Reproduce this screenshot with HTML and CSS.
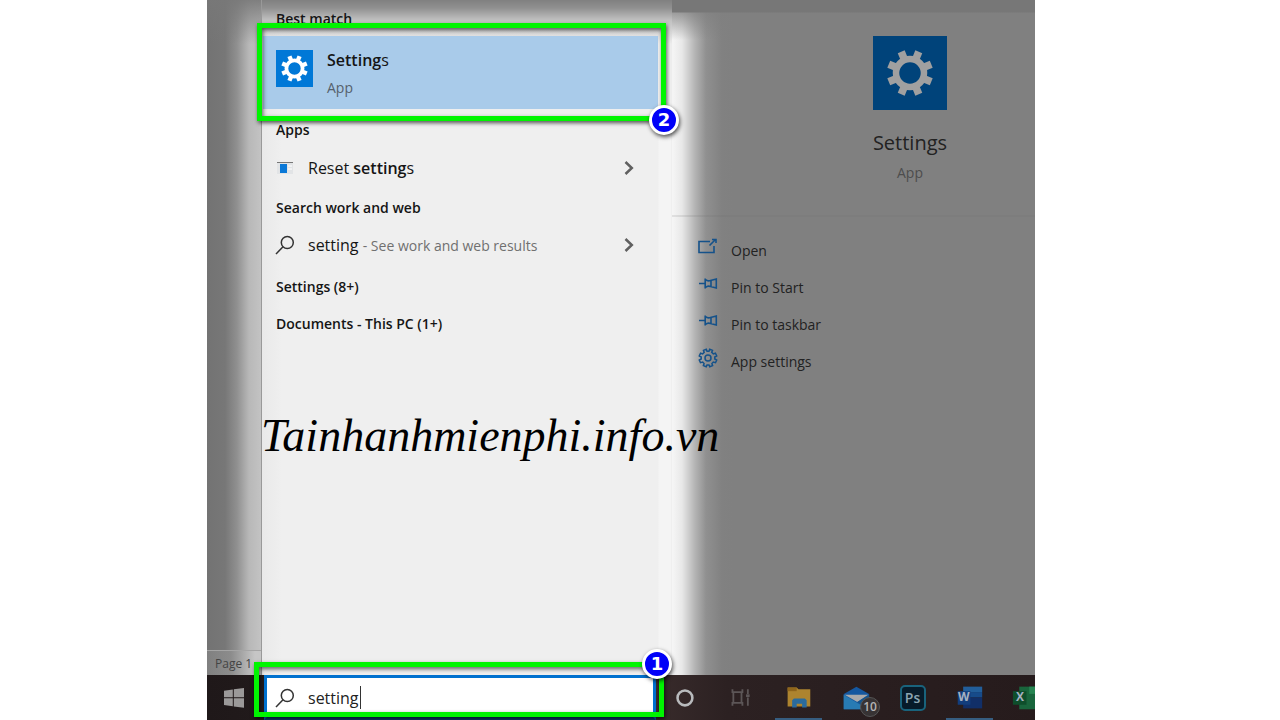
FILE: index.html
```html
<!DOCTYPE html>
<html lang="en">
<head>
<meta charset="utf-8">
<title>Search - Settings</title>
<meta name="viewport" content="width=device-width, initial-scale=1">
<link rel="stylesheet" href="styles.css">
</head>
<body>
<svg class="defs" aria-hidden="true">
  <symbol id="gear" viewBox="0 0 74 74">
    <circle cx="37" cy="37" r="14" fill="none" stroke="currentColor" stroke-width="6.5"/>
    <g stroke="currentColor" stroke-width="7.5">
      <path d="M37 22V14" transform="rotate(22.5 37 37)"/>
      <path d="M37 22V14" transform="rotate(67.500 37 37)"/>
      <path d="M37 22V14" transform="rotate(112.500 37 37)"/>
      <path d="M37 22V14" transform="rotate(157.500 37 37)"/>
      <path d="M37 22V14" transform="rotate(202.500 37 37)"/>
      <path d="M37 22V14" transform="rotate(247.500 37 37)"/>
      <path d="M37 22V14" transform="rotate(292.500 37 37)"/>
      <path d="M37 22V14" transform="rotate(337.500 37 37)"/>
    </g>
  </symbol>
  <symbol id="lens" viewBox="0 0 20 20">
    <circle cx="12.300" cy="7.500" r="6" fill="none" stroke="currentColor" stroke-width="1.500"/>
    <path d="M8 11.800 1 19" fill="none" stroke="currentColor" stroke-width="1.500"/>
  </symbol>
  <symbol id="chevron" viewBox="0 0 10 14">
    <path d="M1.500 1 7.800 7 1.500 13" fill="none" stroke="currentColor" stroke-width="2.500"/>
  </symbol>
  <symbol id="pin" viewBox="0 0 20 20">
    <path d="M1 9.500H7M7.200 4.500V14.500M7.500 5.500C9 7 11 7 12.500 6.500L18.300 5V14L12.500 12.500C11 12 9 12 7.500 13.500M13 6.500V12.500" fill="none" stroke="currentColor" stroke-width="1.600"/>
  </symbol>
</svg>
<div class="page">
  <div class="screen">
    <main class="desktop">
      <div class="document"><div class="status">Page 1</div></div>
      <section class="results">
        <h2 class="heading heading-first">Best match</h2>
        <div class="best-wrap">
          <button class="best">
            <span class="tile tile-small"><svg viewBox="5 5 64 64"><use href="#gear" width="74" height="74"/></svg></span>
            <span class="best-text"><span class="item-title"><b>Setting</b>s</span><span class="item-kind">App</span></span>
          </button>
          <div class="highlight highlight-best"><span class="step">2</span></div>
        </div>
        <h2 class="heading">Apps</h2>
        <button class="row">
          <svg class="row-icon" viewBox="0 0 20 20"><path d="M2 4h16v12H2z" fill="#e2e4e6"/><path d="M2 4.500h16" stroke="#777"/><path d="M5 6h7v9H5z" fill="#0a78d7"/><path d="M13 8h4M13 11h4" stroke="#fff"/></svg>
          <span class="row-text">Reset <b>setting</b>s</span>
          <svg class="chevron"><use href="#chevron"/></svg>
        </button>
        <h2 class="heading">Search work and web</h2>
        <button class="row">
          <svg class="row-icon"><use href="#lens"/></svg>
          <span class="row-text">setting <small>- See work and web results</small></span>
          <svg class="chevron"><use href="#chevron"/></svg>
        </button>
        <div class="more">
          <h2 class="heading heading-more">Settings (8+)</h2>
          <h2 class="heading heading-more">Documents - This PC (1+)</h2>
        </div>
        <div class="watermark">Tainhanhmienphi.info.vn</div>
      </section>
      <aside class="preview">
        <div class="summary">
          <span class="tile tile-large"><svg><use href="#gear"/></svg></span>
          <h1 class="app-name">Settings</h1>
          <p class="app-kind">App</p>
        </div>
        <div class="actions">
          <button class="action"><svg viewBox="0 0 20 20"><path d="M12 4.500H1V15.500H16V9M11.500 8.500 17.500 2.500M14 2.500h4V6" fill="none" stroke="currentColor" stroke-width="1.600"/></svg>Open</button>
          <button class="action"><svg><use href="#pin"/></svg>Pin to Start</button>
          <button class="action"><svg><use href="#pin"/></svg>Pin to taskbar</button>
          <button class="action"><svg viewBox="0 0 20 20"><g fill="none" stroke="currentColor" stroke-width="1.500"><circle cx="10" cy="10" r="3"/><path d="M8.300 1.300 9 3.200H11L11.700 1.300 14.500 2.400 13.700 4.400 15.300 5.900 17.400 5.200 18.700 8 16.800 9V11L18.700 12 17.500 14.700 15.300 14.100 13.900 15.600 14.600 17.600 11.800 18.700 11 16.900H9L8.200 18.700 5.400 17.600 6.100 15.600 4.700 14.100 2.500 14.700 1.300 12 3.200 11V9L1.300 8 2.600 5.200 4.700 5.900 6.200 4.400 5.500 2.400Z"/></g></svg>App settings</button>
        </div>
      </aside>
    </main>
    <footer class="taskbar">
      <button class="start" aria-label="Start"><svg viewBox="0 0 20 20"><path d="M0 2.800 8.800 1.500V9.300H0ZM9.800 1.300 20 0V9.300H9.800ZM0 10.300H8.800V18.300L0 17ZM9.800 10.300H20V19.800L9.800 18.400Z" fill="#9b9999"/></svg></button>
      <div class="search">
        <label for="query" aria-label="Search"><svg><use href="#lens"/></svg></label>
        <input id="query" type="text" value="setting">
        <span class="caret"></span>
        <div class="highlight highlight-search"><span class="step">1</span></div>
      </div>
      <nav class="icons">
        <button aria-label="Cortana"><svg viewBox="0 0 32 32"><circle cx="16.500" cy="16.500" r="8.200" fill="none" stroke="#b9bbbd" stroke-width="2.800"/></svg></button>
        <button aria-label="Task view"><svg viewBox="0 0 32 32"><path d="M6 7v3h11V7M6 25v-3h11v3M7 10v12M16 10v12M23 7v5M23 16v9" fill="none" stroke="#5c5657" stroke-width="2"/><path d="M21 12.500h4v3h-4z" fill="#5c5657"/></svg></button>
        <button class="open" aria-label="File Explorer"><svg viewBox="0 0 32 32"><path d="M4 5h10l2 2h13v19H4z" fill="#ad842f"/><path d="M4 5h10v4H4z" fill="#8f651b"/><path d="M9 27v-8l2-2h12l2 2v8h-5v-4h-6v4z" fill="#2a6b9d"/></svg></button>
        <button class="mail" aria-label="Mail"><svg viewBox="0 0 32 32"><path d="M3 12 17 4 31 12V29H3Z" fill="#1558a0"/><path d="M4 13H30L18 21Z" fill="#aaaaab"/><path d="M3 13 18 22 31 29H3Z" fill="#287bb4"/><path d="M31 13V29L18 21Z" fill="#14548c"/></svg><span class="count">10</span></button>
        <button aria-label="Photoshop"><span class="ps">Ps</span></button>
        <button class="open" aria-label="Word"><svg viewBox="0 0 32 32"><path d="M9 4h21v6H9z" fill="#225e9a"/><path d="M9 10h21v6H9z" fill="#174b8a"/><path d="M9 16h21v12H9z" fill="#112f68"/><path d="M3 9h14v15H3z" fill="#123d7c"/></svg><span class="letter">W</span></button>
        <button aria-label="Excel"><svg viewBox="0 0 32 32"><path d="M8 4h24v25H8z" fill="#19653c"/><path d="M19 4h13v8H19z" fill="#278552"/><path d="M1 9h15v15H1z" fill="#0e4e2b"/></svg><span class="letter letter-x">X</span></button>
      </nav>
    </footer>
  </div>
</div>
</body>
</html>
```
FILE: styles.css
```css
* { box-sizing: border-box; }
body { margin: 0; background: #fff; color: #151515; font-family: "Open Sans", "Noto Sans", sans-serif; }
button { display: flex; align-items: center; margin: 0; padding: 0; border: 0; background: none; color: inherit; font: inherit; text-align: left; }
h1, h2, p { margin: 0; }
b { font-weight: 600; }
.defs { position: absolute; width: 0; height: 0; }

.page { display: grid; grid-template-columns: 207fr 828fr 245fr; min-height: 100vh; }
.screen { grid-column: 2; display: flex; flex-direction: column; min-width: 0; overflow: hidden; }
.desktop { flex: 1; display: grid; grid-template-columns: 54px 411px 1fr; }

.document { display: flex; align-items: flex-end; background: linear-gradient(rgba(120, 120, 120, .9) 0, rgba(120, 120, 120, 0) 44px), linear-gradient(90deg, #737373 0, #777 18px, #909090 30px, #b8b8b8 42px, #c3c3c3 54px); }
.status { width: 100%; height: 25px; padding-left: 8px; border-top: 1px solid #a5a5a5; background: linear-gradient(90deg, #808080, #8c8c8c 24px, #c6c6c6 48px); color: #444; font-size: 12px; line-height: 25px; white-space: nowrap; }

.results { position: relative; border-left: 1px solid #999; background: linear-gradient(#808080 0, #909090 8px, #c0c0c0 20px, rgba(239, 239, 239, 0) 44px), linear-gradient(90deg, #e9e9e9 0, #efefef 20px, #efefef 396px, #f4f4f4 397px, #f4f4f4 409px, #eaeaea 410px); }
.heading { height: 41px; padding-left: 14px; font-size: 14px; font-weight: 600; line-height: 41px; }
.heading-first { height: 36px; line-height: 38px; }
.heading-more { height: 37px; line-height: 37px; }
.more { padding-top: 5px; }
.best-wrap { position: relative; margin: 0 14px 0 1px; }
.best { width: 100%; height: 73px; gap: 14px; align-items: flex-start; padding: 14px 13px 0; background: #a9cbea; }
.tile { display: flex; flex: none; background: #0078d7; color: #fff; }
.tile svg { width: 100%; height: 100%; }
.tile-small { width: 37px; height: 37px; }
.best-text { display: flex; flex-direction: column; gap: 4px; margin-top: -2px; }
.item-title { font-size: 16px; line-height: 24px; }
.item-kind { color: #56616c; font-size: 14px; line-height: 24px; }
.row { width: 100%; height: 36px; padding: 0 38px 0 13px; font-size: 16px; }
.row + .heading { line-height: 43px; }
.row-icon { flex: none; width: 20px; height: 20px; color: #333; }
.row-text { flex: 1; padding-left: 13px; white-space: nowrap; }
.row-text small { color: #707070; font-size: 14px; }
.chevron { width: 10px; height: 14px; color: #606060; }
.watermark { position: absolute; top: 404px; left: -1px; z-index: 3; color: #000; font-family: "Liberation Serif", serif; font-size: 46px; font-style: italic; line-height: 64px; white-space: nowrap; }

.highlight { position: absolute; z-index: 2; border: 5px solid #00f500; box-shadow: 1px 2px 4px rgba(0, 0, 0, .65), inset 1px 2px 4px rgba(0, 0, 0, .6); pointer-events: none; }
.highlight-best { inset: -13px -8px -12px -6px; }
.highlight-search { inset: -16px -11px 0 -13px; }
.step { position: absolute; right: -18px; width: 30px; height: 30px; border: 3px solid #fff; border-radius: 50%; background: #0000f8; box-shadow: 1px 2px 4px rgba(0, 0, 0, .7); color: #fff; font: bold 18px/24px "DejaVu Sans", sans-serif; text-align: center; }
.highlight-best .step { bottom: -19px; }
.highlight-search .step { top: -18px; right: -13px; }

.preview { background: linear-gradient(#777 0, #777 12px, rgba(128, 128, 128, .75) 13px, rgba(128, 128, 128, 0) 40px), linear-gradient(90deg, #f6f6f6 0, #e8e8e8 10px, #b4b4b4 23px, #909090 34px, #818181 50px, #808080 60px); color: #222; }
.summary { display: flex; flex-direction: column; align-items: center; height: 217px; padding: 36px 0 0 113px; border-bottom: 2px solid rgba(110, 110, 110, .15); }
.tile-large { width: 74px; height: 74px; background: #00437a; color: #a0a0a0; }
.app-name { margin-top: 18px; font-size: 20px; font-weight: 400; line-height: 30px; }
.app-kind { margin-top: 3px; color: #4d4d4d; font-size: 14px; line-height: 24px; }
.actions { padding: 15px 0 0 26px; }
.action { height: 37px; gap: 13px; font-size: 14px; }
.action svg { width: 20px; height: 20px; margin-bottom: 7px; color: #15528a; }

.taskbar { display: grid; grid-template-columns: 57px 392px 1fr; height: 45px; background: linear-gradient(90deg, #1f1819, #211a1b 55px, #382b2b 450px, #2c2122 520px, #261b1c); }
.start { justify-content: center; }
.start svg { width: 20px; height: 20px; margin-left: -3px; }
.search { position: relative; display: flex; align-items: center; border: 3px solid #0071cf; border-bottom-color: #0b3d69; background: #fff; }
.search label { display: flex; padding-left: 8px; }
.search label svg { width: 20px; height: 20px; color: #333; }
.search input { flex: 1; min-width: 0; height: 36px; padding: 0 13px; border: 0; outline: 0; background: none; color: #222; font: 16px "Open Sans", sans-serif; }
.caret { position: absolute; top: 8px; left: 93px; width: 1px; height: 23px; background: #333; }
.icons { display: flex; min-width: 0; }
.icons button { position: relative; flex: 0 0 57px; justify-content: center; }
.icons svg { width: 29px; height: 29px; }
.icons .open::after { content: ""; position: absolute; right: 5px; bottom: 0; left: 5px; height: 2px; background: #365d80; }
.count { position: absolute; right: 4px; bottom: 3px; width: 20px; height: 20px; border: 1px solid #555; border-radius: 50%; background: #373334; color: #b5b5b5; font-size: 12px; font-weight: 600; line-height: 18px; text-align: center; }
.ps { width: 26px; height: 26px; border: 2px solid #19637c; border-radius: 5px; background: #071b2a; color: #8ba5b2; font-size: 14px; font-weight: 600; line-height: 21px; text-align: center; }
.letter { position: absolute; left: 17px; top: 14px; color: #a5b1c2; font-size: 12px; font-weight: 700; line-height: 16px; }
.letter-x { left: 18px; }
```
